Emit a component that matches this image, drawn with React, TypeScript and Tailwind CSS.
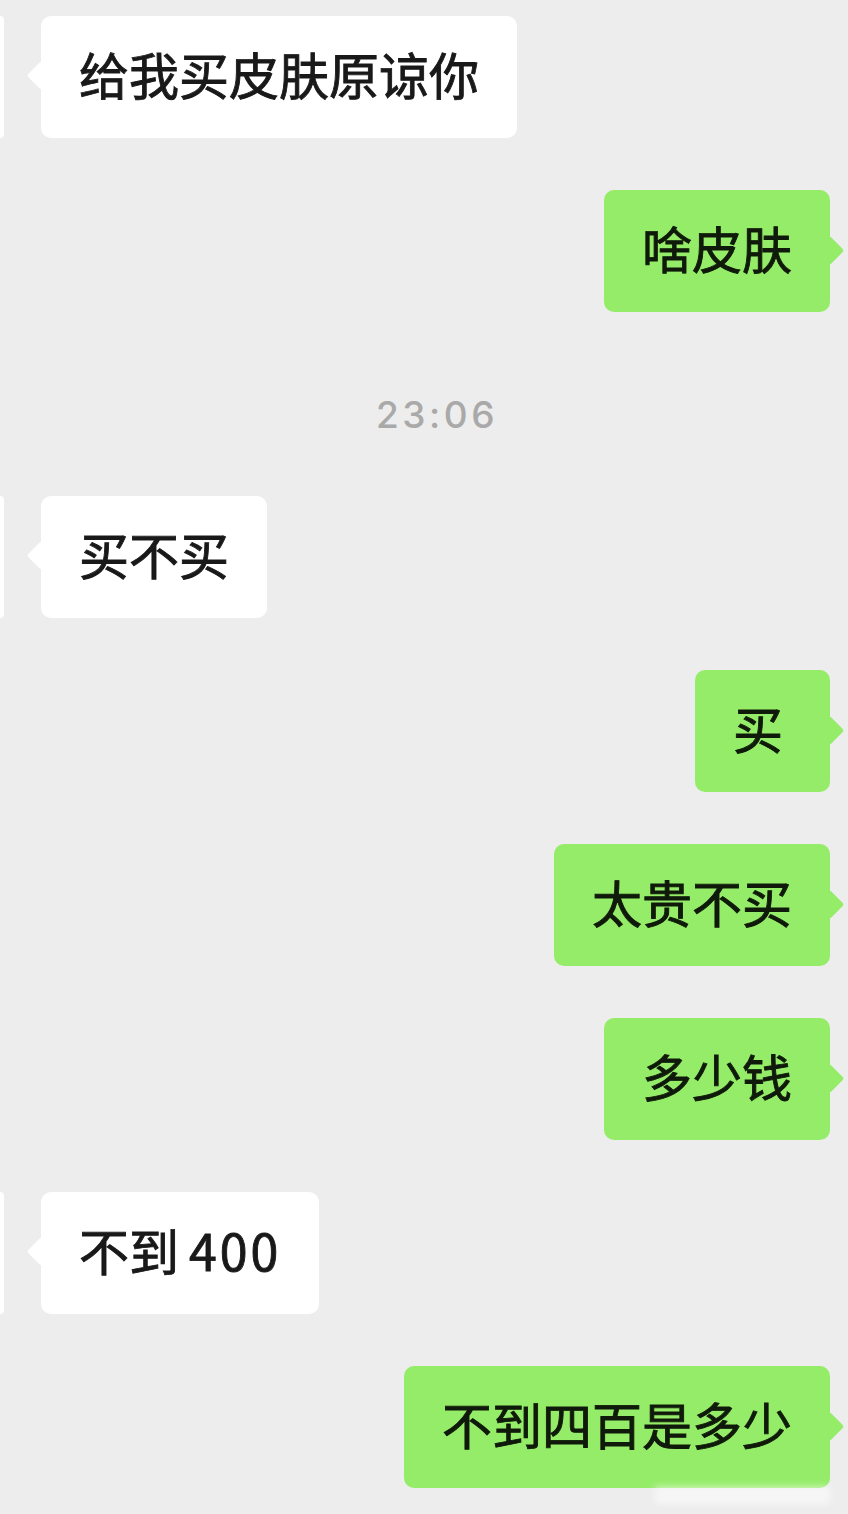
import React from "react";

type Msg =
  | { kind: "in"; text: React.ReactNode }
  | { kind: "out"; text: React.ReactNode }
  | { kind: "time"; text: string };

const messages: Msg[] = [
  { kind: "in", text: "给我买皮肤原谅你" },
  { kind: "out", text: "啥皮肤" },
  { kind: "time", text: "23:06" },
  { kind: "in", text: "买不买" },
  { kind: "out", text: "买" },
  { kind: "out", text: "太贵不买" },
  { kind: "out", text: "多少钱" },
  {
    kind: "in",
    text: (
      <>
        不到<span className="ml-[10px] tracking-[3px]">400</span>
      </>
    ),
  },
  { kind: "out", text: "不到四百是多少" },
];

// regular weight thickened a little with a stroke, sitting between regular and bold
const font =
  "font-['Noto_Sans_CJK_SC','Noto_Sans',sans-serif] text-[50px] leading-[70px] font-normal [-webkit-text-stroke:0.9px_currentColor]";

function Incoming({ children }: { children: React.ReactNode }) {
  return (
    <div className="flex items-stretch">
      {/* edge of the contact's avatar, mostly scrolled off screen */}
      <div className="w-[4px] h-[122px] bg-white rounded-r-[4px]" />
      <div className="relative ml-[37px]">
        <div className="absolute left-[-10px] top-[49px] w-[21px] h-[21px] rotate-45 rounded-[3px] bg-white" />
        <div
          className={`relative bg-white rounded-[10px] px-[38px] pt-[22px] pb-[30px] text-[#191919] ${font}`}
        >
          {children}
        </div>
      </div>
    </div>
  );
}

function Outgoing({ children }: { children: React.ReactNode }) {
  return (
    <div className="flex justify-end pr-[18px]">
      <div className="relative">
        <div className="absolute right-[-10px] top-[50px] w-[21px] h-[21px] rotate-45 rounded-[3px] bg-[#95ec69]" />
        <div
          className={`relative bg-[#95ec69] rounded-[10px] px-[38px] pt-[22px] pb-[30px] min-w-[135px] text-left text-[#0f1a0a] ${font}`}
        >
          {children}
        </div>
      </div>
    </div>
  );
}

function TimeStamp({ text }: { text: string }) {
  return (
    <div className="pt-[33px] pb-[11px] pl-[26px] text-center font-['Inter','Liberation_Sans',sans-serif] font-medium text-[37px] leading-[36px] tracking-[3.5px] text-[#a9a9a9]">
      {text}
    </div>
  );
}

export default function App() {
  return (
    <div className="relative w-[848px] min-h-[1514px] bg-[#ededed] overflow-hidden">
      <div className="flex flex-col gap-[52px] pt-[16px]">
        {messages.map((m, i) =>
          m.kind === "in" ? (
            <Incoming key={i}>{m.text}</Incoming>
          ) : m.kind === "out" ? (
            <Outgoing key={i}>{m.text}</Outgoing>
          ) : (
            <TimeStamp key={i} text={m.text} />
          )
        )}
      </div>
      {/* faint smudge under the last bubble */}
      <div className="absolute left-[655px] top-[1486px] w-[175px] h-[18px] bg-white/50 blur-[3px]" />
    </div>
  );
}
